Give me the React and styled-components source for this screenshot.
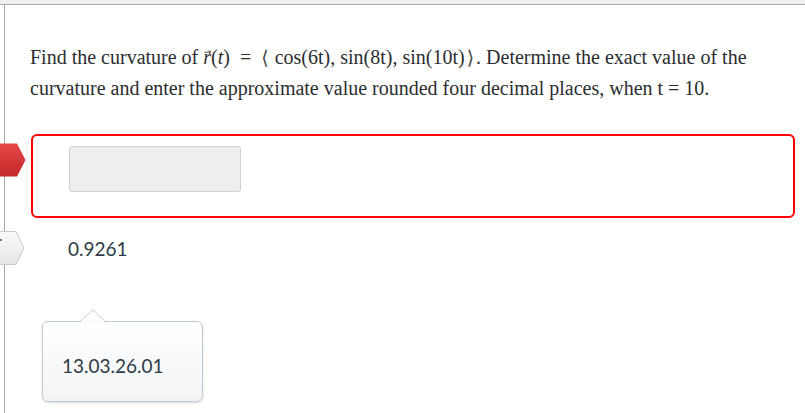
import React from 'react'
import styled, { createGlobalStyle } from 'styled-components'

const GlobalStyle = createGlobalStyle`
  html, body {
    margin: 0;
    padding: 0;
    background: #fff;
  }
  body {
    font-family: "Liberation Serif", "Times New Roman", serif;
    color: #202122;
  }
`

const TopStrip = styled.div`
  height: 4px;
  background: #f1f1f1;
  border-bottom: 1px solid #a9a9a9;
`

const Page = styled.div`
  margin-left: 4px;
  border-left: 1px solid #a9a9a9;
  min-height: 408px;
  box-sizing: border-box;
  padding-top: 37px;
`

const Question = styled.p`
  margin: 0 0 0 25px;
  font-size: 20px;
  line-height: 31px;
  color: #2b2d2f;
  max-width: 740px;
`

const MathVar = styled.span`
  font-style: italic;
  position: relative;
`

const VecArrow = styled.svg`
  position: absolute;
  left: 1px;
  top: 3px;
`

const Bracket = styled.span`
  font-family: "DejaVu Serif", serif;
  font-size: 19px;
  color: #444;
  padding: ${p => (p.$open ? '0 6px 0 2px' : '0 2px 0 2px')};
`

const Eq = styled.span`
  padding: 0 8px 0 10px;
`

const AnswerRow = styled.div`
  position: relative;
  margin: 30px 10px 0 26px;
`

const AnswerBox = styled.div`
  border: 2px solid #ff0000;
  border-radius: 6px;
  height: 84px;
  box-sizing: border-box;
  padding: 10px 0 0 36px;
`

const Input = styled.div`
  width: 172px;
  height: 46px;
  box-sizing: border-box;
  background: #eeeeee;
  border: 1px solid #cfcfcf;
  border-radius: 3px;
`

const Marker = styled.svg`
  position: absolute;
  left: ${p => p.$left}px;
  top: ${p => p.$top}px;
`

const ValueRow = styled.div`
  position: relative;
  display: flex;
  align-items: center;
  height: 34px;
  margin-top: 13px;
  padding-left: 63px;
  font-family: Lato, "Open Sans", sans-serif;
  font-size: 19px;
  color: #2d3b45;
`

const TooltipWrap = styled.div`
  position: relative;
  margin: 56px 0 0 37px;
  width: 161px;
`

const Tooltip = styled.div`
  height: 81px;
  box-sizing: border-box;
  border: 1px solid #c3c9d0;
  border-radius: 6px;
  background: linear-gradient(#ffffff, #f2f4f6);
  box-shadow: 0 1px 2px rgba(0, 0, 0, 0.15);
  display: flex;
  align-items: center;
  padding: 8px 0 0 19px;
  font-family: Lato, "Open Sans", sans-serif;
  font-size: 19px;
  color: #2d3b45;
`

const TipArrow = styled.svg`
  position: absolute;
  left: 38px;
  top: -12px;
`

export default function App() {
  return (
    <>
      <GlobalStyle />
      <TopStrip />
      <Page>
        <Question>
          Find the curvature of{' '}
          <MathVar>
            r
            <VecArrow width="8" height="6" viewBox="0 0 8 6">
              <path d="M0.5 3.2 H6.5 M4.6 1.2 L7 3.2 L4.6 5" stroke="#333" strokeWidth="0.9" fill="none" />
            </VecArrow>
          </MathVar>
          (<MathVar>t</MathVar>)<Eq>=</Eq>
          <Bracket $open>⟨</Bracket>cos(6t), sin(8t), sin(10t)<Bracket>⟩</Bracket>. Determine the exact value of the
          curvature and enter the approximate value rounded four decimal places, when t = 10.
        </Question>

        <AnswerRow>
          <Marker $left={-31} $top={9} width="26" height="34" viewBox="0 0 26 34">
            <defs>
              <linearGradient id="red" x1="0" y1="0" x2="0" y2="1">
                <stop offset="0" stopColor="#e54848" />
                <stop offset="1" stopColor="#c3282a" />
              </linearGradient>
            </defs>
            <path d="M0 0.5 H17 L25.5 17 L17 33.5 H0 Z" fill="url(#red)" />
          </Marker>
          <AnswerBox>
            <Input />
          </AnswerBox>
        </AnswerRow>

        <ValueRow>
          <Marker $left={-5} $top={0} width="26" height="34" viewBox="0 0 26 34">
            <defs>
              <linearGradient id="grey" x1="0" y1="0" x2="0" y2="1">
                <stop offset="0" stopColor="#fbfbfb" />
                <stop offset="1" stopColor="#e6e6e6" />
              </linearGradient>
            </defs>
            <path d="M-1 0.5 H16 L24 17 L16 33.5 H-1 Z" fill="url(#grey)" stroke="#c9c9c9" />
            <path d="M1 8 V10" stroke="#444" strokeWidth="1.4" />
          </Marker>
          0.9261
        </ValueRow>

        <TooltipWrap>
          <TipArrow width="26" height="13" viewBox="0 0 26 13">
            <path d="M0 12.5 L13 0.8 L25 12.5" fill="#fff" stroke="#c3c9d0" />
            <path d="M1 13 H24" stroke="#fff" strokeWidth="1.5" />
          </TipArrow>
          <Tooltip>13.03.26.01</Tooltip>
        </TooltipWrap>
      </Page>
    </>
  )
}
